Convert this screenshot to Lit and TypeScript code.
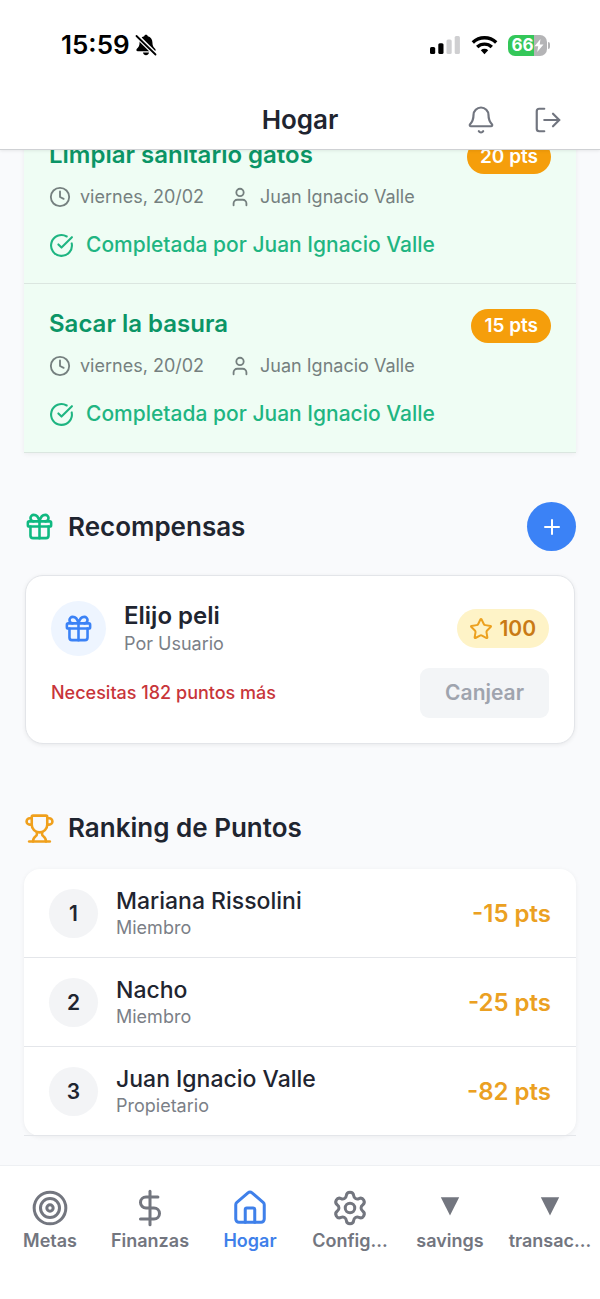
import { LitElement, html, css, svg, nothing, type TemplateResult } from "lit";
import { customElement, property } from "lit/decorators.js";
import { classMap } from "lit/directives/class-map.js";

const ICONS: Record<string, TemplateResult> = {
  bell: svg`<path d="M10.268 21a2 2 0 0 0 3.464 0"/><path d="M3.262 15.326A1 1 0 0 0 4 17h16a1 1 0 0 0 .74-1.673C19.41 13.956 18 12.499 18 8A6 6 0 0 0 6 8c0 4.499-1.411 5.956-2.738 7.326"/>`,
  logout: svg`<path d="M9 21H5a2 2 0 0 1-2-2V5a2 2 0 0 1 2-2h4"/><path d="m16 17 5-5-5-5"/><path d="M21 12H9"/>`,
  clock: svg`<circle cx="12" cy="12" r="10"/><path d="M12 6v6l4 2"/>`,
  user: svg`<path d="M19 21v-2a4 4 0 0 0-4-4H9a4 4 0 0 0-4 4v2"/><circle cx="12" cy="7" r="4"/>`,
  check: svg`<path d="M21.801 10A10 10 0 1 1 17 3.335"/><path d="m9 11 3 3L22 4"/>`,
  gift: svg`<rect x="3" y="8" width="18" height="4" rx="1"/><path d="M12 8v13"/><path d="M19 12v7a2 2 0 0 1-2 2H7a2 2 0 0 1-2-2v-7"/><path d="M7.5 8a2.5 2.5 0 0 1 0-5A4.8 8 0 0 1 12 8a4.8 8 0 0 1 4.5-5 2.5 2.5 0 0 1 0 5"/>`,
  trophy: svg`<path d="M10 14.66v1.626a2 2 0 0 1-.976 1.696A5 5 0 0 0 7 21.978"/><path d="M14 14.66v1.626a2 2 0 0 0 .976 1.696A5 5 0 0 1 17 21.978"/><path d="M18 9h1.5a2.5 2.5 0 0 0 0-5H18"/><path d="M4 22h16"/><path d="M6 9a6 6 0 0 0 12 0V3a1 1 0 0 0-1-1H7a1 1 0 0 0-1 1z"/><path d="M6 9H4.5a2.5 2.5 0 0 1 0-5H6"/>`,
  plus: svg`<path d="M5 12h14"/><path d="M12 5v14"/>`,
  star: svg`<path d="M11.525 2.295a.53.53 0 0 1 .95 0l2.31 4.679a2.123 2.123 0 0 0 1.595 1.16l5.166.756a.53.53 0 0 1 .294.904l-3.736 3.638a2.123 2.123 0 0 0-.611 1.878l.882 5.14a.53.53 0 0 1-.771.56l-4.618-2.428a2.122 2.122 0 0 0-1.973 0L6.396 21.01a.53.53 0 0 1-.77-.56l.881-5.139a2.122 2.122 0 0 0-.611-1.879L2.16 9.795a.53.53 0 0 1 .294-.906l5.165-.755a2.122 2.122 0 0 0 1.597-1.16z"/>`,
  target: svg`<circle cx="12" cy="12" r="10"/><circle cx="12" cy="12" r="6"/><circle cx="12" cy="12" r="2"/>`,
  dollar: svg`<path d="M12 1.500v21"/><path d="M17 5H9.500a3.500 3.500 0 0 0 0 7h5a3.500 3.500 0 0 1 0 7H6"/>`,
  house: svg`<path d="M15 21v-8a1 1 0 0 0-1-1h-4a1 1 0 0 0-1 1v8"/><path d="M3 10a2 2 0 0 1 .709-1.528l7-6a2 2 0 0 1 2.582 0l7 6A2 2 0 0 1 21 10v9a2 2 0 0 1-2 2H5a2 2 0 0 1-2-2z"/>`,
  settings: svg`<path d="M9.671 4.136a2.34 2.34 0 0 1 4.659 0 2.34 2.34 0 0 0 3.319 1.915 2.34 2.34 0 0 1 2.33 4.033 2.34 2.34 0 0 0 0 3.831 2.34 2.34 0 0 1-2.33 4.033 2.34 2.34 0 0 0-3.319 1.915 2.34 2.34 0 0 1-4.659 0 2.34 2.34 0 0 0-3.32-1.915 2.34 2.34 0 0 1-2.33-4.033 2.34 2.34 0 0 0 0-3.831A2.34 2.34 0 0 1 6.35 6.051a2.34 2.34 0 0 0 3.319-1.915"/><circle cx="12" cy="12" r="3"/>`,
  triangle: svg`<path d="M6.200 5.200h11.600L12 16.800z" fill="currentColor" stroke="none"/>`,
};

@customElement("ui-icon")
class UiIcon extends LitElement {
  @property() name = "";

  static styles = css`
    :host { display: block; flex: none; width: 24px; height: 24px; }
    .icon {
      display: block; width: 100%; height: 100%; overflow: visible;
      fill: none; stroke: currentColor; stroke-width: var(--icon-stroke, 2);
      stroke-linecap: round; stroke-linejoin: round;
    }
  `;

  render() {
    return html`<svg class="icon" viewBox="0 0 24 24" aria-hidden="true">${ICONS[this.name] ?? nothing}</svg>`;
  }
}

@customElement("status-bar")
class StatusBar extends LitElement {
  static styles = css`
    :host {
      display: flex; align-items: center; justify-content: space-between;
      height: 90px; padding: 0 50px 0 61px; color: #000;
    }
    .side { display: flex; align-items: center; }
    .left { gap: 5px; }
    .right { gap: 10px; }
    .time { font-size: 26px; font-weight: 600; line-height: 30px; }
    .glyph { display: block; }
    .battery { display: flex; align-items: center; gap: 1px; }
    .cell {
      display: flex; align-items: center; justify-content: center;
      width: 39px; height: 21px; border-radius: 7px; color: #fff;
      font-size: 17px; font-weight: 700; line-height: 21px;
      background: linear-gradient(90deg, #34c759 66%, #b4b4b6 66%);
    }
    .nub { width: 2px; height: 7px; border-radius: 0 2px 2px 0; background: #b4b4b6; }
  `;

  render() {
    return html`
      <div class="side left">
        <span class="time">15:59</span>
        <svg class="glyph" width="22" height="22" viewBox="0 0 22 22" aria-hidden="true">
          <path d="M11 .8c-1 0-1.700.7-1.800 1.500C6.300 3.100 4.600 5.400 4.600 8.300c0 3.600-1 4.900-2.700 6.500-1 1-.5 2.500.9 2.500h16.400c1.400 0 1.900-1.500.9-2.500-1.700-1.600-2.700-2.900-2.700-6.500 0-2.900-1.700-5.200-4.600-6-.1-.8-.8-1.500-1.800-1.500zM8 18.500h6c-.3 1.700-1.500 2.800-3 2.800s-2.700-1.100-3-2.800z"/>
          <path d="M1.500 1.500l19 19" stroke="#fff" stroke-width="4.500"/>
          <path d="M1.500 2l19 18.500" stroke="#000" stroke-width="1.800" stroke-linecap="round"/>
        </svg>
      </div>
      <div class="side right">
        <svg class="glyph" width="31" height="20" viewBox="0 0 31 20" aria-hidden="true">
          <rect x="0" y="12" width="5.200" height="7" rx="1.500"/>
          <rect x="8.300" y="8.300" width="5.200" height="10.700" rx="1.500"/>
          <g fill="#cfcfd1">
            <rect x="16.500" y="4.500" width="5.200" height="14.500" rx="1.500"/>
            <rect x="24.700" y="1" width="5.200" height="18" rx="1.500"/>
          </g>
        </svg>
        <svg class="glyph" width="27" height="20" viewBox="0 0 27 20" fill="none" stroke="#000" stroke-width="3.400" aria-hidden="true">
          <path d="M1.800 7.400a17 17 0 0 1 23.400 0"/>
          <path d="M6.200 12a10.600 10.600 0 0 1 14.600 0"/>
          <path d="M13.500 19.200l-3.700-3.900a5.500 5.500 0 0 1 7.400 0z" fill="#000" stroke="none"/>
        </svg>
        <div class="battery">
          <div class="cell">
            66
            <svg class="glyph" width="10" height="13" viewBox="0 0 10 13" aria-hidden="true">
              <path d="M6.500 0L.5 7.300h3.700L3.200 13l6.300-7.600H5.700z" fill="#fff"/>
            </svg>
          </div>
          <div class="nub"></div>
        </div>
      </div>
    `;
  }
}

interface Task { title: string; date: string; owner: string; points: number; doneBy: string; }
interface Member { name: string; role: string; points: number; }
interface Tab { icon: string; label: string; href: string; active?: boolean; }

const TASKS: Task[] = [
  { title: "Limpiar sanitario gatos", date: "viernes, 20/02", owner: "Juan Ignacio Valle", points: 20, doneBy: "Juan Ignacio Valle" },
  { title: "Sacar la basura", date: "viernes, 20/02", owner: "Juan Ignacio Valle", points: 15, doneBy: "Juan Ignacio Valle" },
];

const MEMBERS: Member[] = [
  { name: "Mariana Rissolini", role: "Miembro", points: -15 },
  { name: "Nacho", role: "Miembro", points: -25 },
  { name: "Juan Ignacio Valle", role: "Propietario", points: -82 },
];

const TABS: Tab[] = [
  { icon: "target", label: "Metas", href: "#metas" },
  { icon: "dollar", label: "Finanzas", href: "#finanzas" },
  { icon: "house", label: "Hogar", href: "#hogar", active: true },
  { icon: "settings", label: "Config...", href: "#config" },
  { icon: "triangle", label: "savings", href: "#savings" },
  { icon: "triangle", label: "transac...", href: "#transactions" },
];

@customElement("app-root")
class AppRoot extends LitElement {
  static styles = css`
    :host {
      display: flex; flex-direction: column; height: 100vh;
      font-family: Inter, "Liberation Sans", sans-serif;
      color: #1f2530; background: #f9fafc;
    }
    * { box-sizing: border-box; margin: 0; }
    button { font-family: inherit; border: 0; padding: 0; cursor: pointer; }
    ul, ol { list-style: none; padding: 0; }

    .top {
      flex: none; z-index: 1; background: #fff;
      border-bottom: 1px solid #cfd1d4; box-shadow: 0 1px 3px rgba(0, 0, 0, 0.08);
    }
    .bar {
      display: grid; grid-template-columns: 1fr auto 1fr; align-items: center;
      height: 59px; padding: 0 28px;
    }
    .screen-title { grid-column: 2; font-size: 26px; font-weight: 600; line-height: 32px; }
    .actions { display: flex; justify-content: flex-end; gap: 18px; }
    .action {
      display: grid; place-items: center; width: 49px; height: 49px;
      background: none; color: #71757f; --icon-stroke: 1.75;
    }
    .action ui-icon { width: 30px; height: 30px; }

    .content {
      flex: 1; min-height: 0; overflow: hidden;
      display: flex; flex-direction: column; justify-content: flex-end;
      padding: 0 24px 29px;
    }
    .content > * { flex: none; }

    .tasks { box-shadow: 0 1px 5px rgba(0, 0, 0, 0.06); }
    .task { padding: 25px; border-bottom: 1px solid #dbe6e0; background: #effdf4; }
    .task-head { display: flex; justify-content: space-between; align-items: flex-start; }
    .task-title { font-size: 24px; font-weight: 600; line-height: 30px; color: #0b9566; }
    .badge {
      padding: 0 13px; border-radius: 17px; background: #f59e0b; color: #fff;
      font-size: 19px; font-weight: 600; line-height: 34px;
    }
    .meta {
      display: flex; gap: 25px; margin: 12px 0 24px;
      font-size: 18px; line-height: 22px; color: #75807f;
    }
    .meta-item { display: flex; align-items: center; gap: 9px; }
    .meta-item ui-icon { width: 22px; height: 22px; }
    .done {
      display: flex; align-items: center; gap: 12px;
      font-size: 21px; font-weight: 500; line-height: 26px; color: #1fb582;
    }
    .done ui-icon { width: 25px; height: 25px; }

    .section-head { display: flex; align-items: center; gap: 13px; margin-bottom: 24px; }
    .section-head ui-icon { width: 31px; height: 31px; }
    .section-title { font-size: 26px; font-weight: 600; line-height: 34px; }
    .rewards { margin: 49px 0 67px; }
    .green { color: #10b981; }
    .amber { color: #f0a01c; }
    .add {
      display: grid; place-items: center; width: 49px; height: 49px; margin-left: auto;
      border-radius: 50%; background: #3b82f6; color: #fff;
    }
    .section-head .add ui-icon { width: 24px; height: 24px; }

    .card {
      margin: 0 1px; padding: 25px; border: 1px solid #e3e5e9; border-radius: 18px;
      background: #fff; box-shadow: 0 1px 4px rgba(0, 0, 0, 0.07);
    }
    .reward { display: flex; align-items: center; gap: 18px; height: 55px; }
    .reward-icon {
      display: grid; place-items: center; width: 55px; height: 55px;
      border-radius: 50%; background: #eef5ff; color: #3b82f6;
    }
    .reward-icon ui-icon { width: 31px; height: 31px; }
    .reward-text { flex: 1; }
    .reward-name { font-size: 24px; font-weight: 600; line-height: 30px; }
    .reward-text .sub { line-height: 26px; }
    .sub { font-size: 18px; line-height: 24px; color: #7b7f87; }
    .price {
      display: flex; align-items: center; gap: 6px; padding: 0 13px 0 12px;
      border-radius: 20px; background: #fef3c7; color: #c97a15;
      font-size: 21px; font-weight: 600; line-height: 39px;
    }
    .price ui-icon { width: 24px; height: 24px; color: #eca11f; }
    .reward-foot { display: flex; align-items: center; justify-content: space-between; margin-top: 12px; }
    .warning { font-size: 18px; font-weight: 500; line-height: 24px; color: #c8353a; }
    .redeem {
      padding: 0 25px; border-radius: 9px; background: #f3f5f7; color: #9fa4ae;
      font-size: 21px; font-weight: 600; line-height: 50px;
    }

    .ranking { border-radius: 16px; background: #fff; box-shadow: 0 1px 5px rgba(0, 0, 0, 0.06); }
    .member {
      display: flex; align-items: center; gap: 18px;
      padding: 18px 25px 17px; border-bottom: 1px solid #e4e6ea;
    }
    .place {
      display: grid; place-items: center; width: 49px; height: 49px; border-radius: 50%;
      background: #f3f4f6; font-size: 21px; font-weight: 600;
    }
    .member-text { flex: 1; }
    .member-name { font-size: 23px; font-weight: 500; line-height: 29px; }
    .score { font-size: 24px; font-weight: 600; line-height: 30px; color: #eba022; }

    .tabs {
      flex: none; display: grid; grid-template-columns: repeat(6, minmax(0, 1fr));
      padding: 23px 0 48px; background: #fff; border-top: 1px solid #eef0f3;
    }
    .tab {
      display: flex; flex-direction: column; align-items: center; gap: 4px;
      font-size: 18px; font-weight: 600; line-height: 20px;
      color: #73767f; text-decoration: none; white-space: nowrap; --icon-stroke: 1.9;
    }
    .tab ui-icon { width: 38px; height: 38px; }
    .tab.active { color: #3f80ea; }
  `;

  private renderTask(task: Task) {
    return html`
      <li class="task">
        <div class="task-head">
          <h3 class="task-title">${task.title}</h3>
          <span class="badge">${task.points} pts</span>
        </div>
        <div class="meta">
          <span class="meta-item"><ui-icon name="clock"></ui-icon>${task.date}</span>
          <span class="meta-item"><ui-icon name="user"></ui-icon>${task.owner}</span>
        </div>
        <p class="done"><ui-icon name="check"></ui-icon>Completada por ${task.doneBy}</p>
      </li>
    `;
  }

  private renderMember(member: Member, index: number) {
    return html`
      <li class="member">
        <span class="place">${index + 1}</span>
        <div class="member-text">
          <p class="member-name">${member.name}</p>
          <p class="sub">${member.role}</p>
        </div>
        <span class="score">${member.points} pts</span>
      </li>
    `;
  }

  render() {
    return html`
      <header class="top">
        <status-bar></status-bar>
        <div class="bar">
          <h1 class="screen-title">Hogar</h1>
          <div class="actions">
            <button class="action" aria-label="Notificaciones"><ui-icon name="bell"></ui-icon></button>
            <button class="action" aria-label="Salir"><ui-icon name="logout"></ui-icon></button>
          </div>
        </div>
      </header>
      <main class="content">
        <ul class="tasks">${TASKS.map((t) => this.renderTask(t))}</ul>
        <section class="rewards">
          <div class="section-head">
            <ui-icon class="green" name="gift"></ui-icon>
            <h2 class="section-title">Recompensas</h2>
            <button class="add" aria-label="Agregar recompensa"><ui-icon name="plus"></ui-icon></button>
          </div>
          <article class="card">
            <div class="reward">
              <span class="reward-icon"><ui-icon name="gift"></ui-icon></span>
              <div class="reward-text">
                <h3 class="reward-name">Elijo peli</h3>
                <p class="sub">Por Usuario</p>
              </div>
              <span class="price"><ui-icon name="star"></ui-icon>100</span>
            </div>
            <div class="reward-foot">
              <p class="warning">Necesitas 182 puntos más</p>
              <button class="redeem" disabled>Canjear</button>
            </div>
          </article>
        </section>
        <section>
          <div class="section-head">
            <ui-icon class="amber" name="trophy"></ui-icon>
            <h2 class="section-title">Ranking de Puntos</h2>
          </div>
          <ol class="ranking">${MEMBERS.map((m, i) => this.renderMember(m, i))}</ol>
        </section>
      </main>
      <nav class="tabs">
        ${TABS.map((t) => html`
          <a class=${classMap({ tab: true, active: !!t.active })} href=${t.href}>
            <ui-icon name=${t.icon}></ui-icon>${t.label}
          </a>
        `)}
      </nav>
    `;
  }
}
